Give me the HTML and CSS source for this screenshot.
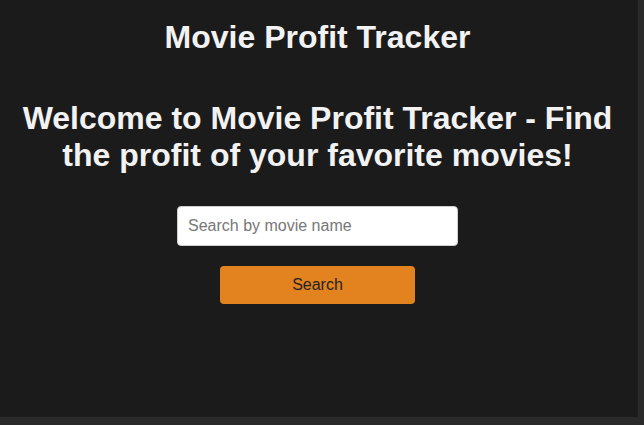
FILE: index.html
```html
<!DOCTYPE html>
<html lang="en">
<head>
<meta charset="utf-8">
<title>Movie Profit Tracker</title>
<link rel="stylesheet" href="styles.css">
</head>
<body>
<main class="app">
  <h1 class="title">Movie Profit Tracker</h1>
  <h2 class="welcome">Welcome to Movie Profit Tracker - Find the profit of your favorite movies!</h2>
  <form class="search" onsubmit="return false;">
    <input class="search-input" type="text" placeholder="Search by movie name">
    <button class="search-btn" type="submit">Search</button>
  </form>
</main>
</body>
</html>
```
FILE: styles.css
```css
html, body {
  margin: 0;
  padding: 0;
  background: #2a2a2b;
  height: 100%;
  overflow: hidden;
}
.app {
  width: 638px;
  height: 417px;
  box-sizing: border-box;
  padding: 19px 3px 0 0;
  background: #1b1b1b;
  font-family: "Liberation Sans", Arial, sans-serif;
  color: #f2f2f2;
  text-align: center;
}
.title {
  margin: 0;
  font-size: 32px;
  font-weight: bold;
  line-height: 37px;
}
.welcome {
  margin: 44px 0 0;
  padding: 0 16px;
  font-size: 32px;
  font-weight: bold;
  line-height: 37px;
}
.search {
  margin-top: 32px;
  display: flex;
  flex-direction: column;
  align-items: center;
  gap: 20px;
}
.search-input {
  width: 281px;
  height: 40px;
  box-sizing: border-box;
  padding: 0 10px;
  border: 1px solid #cfcfcf;
  border-radius: 4px;
  background: #fff;
  font-family: "Liberation Sans", Arial, sans-serif;
  font-size: 16px;
  color: #333;
}
.search-input::placeholder {
  color: #777;
}
.search-btn {
  width: 195px;
  height: 38px;
  border: none;
  border-radius: 4px;
  background: #e3831f;
  color: #222;
  font-family: "Liberation Sans", Arial, sans-serif;
  font-size: 16px;
  cursor: pointer;
}
```
